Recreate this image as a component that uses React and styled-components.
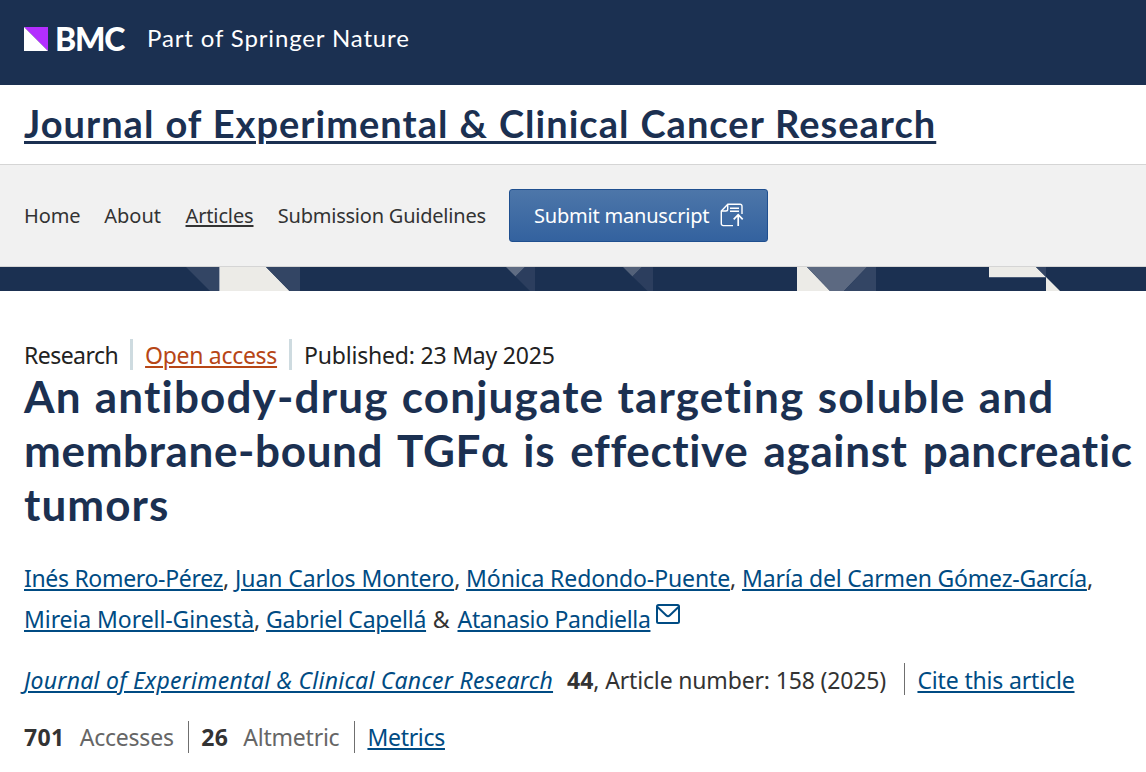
import React from "react";
import styled, { createGlobalStyle } from "styled-components";

const App = () => {
  return (
    <>
      <GlobalStyle />
      <TopBar>
        <LogoMark width="24" height="24" viewBox="0 0 24 24">
          <path d="M0 0h24v24z" fill="#b32eff" />
          <path d="M0 0l24 24H0z" fill="#fff" />
        </LogoMark>
        <Brand>BMC</Brand>
        <Tagline>Part of Springer Nature</Tagline>
      </TopBar>

      <JournalBar>
        <JournalLink>Journal of Experimental &amp; Clinical Cancer Research</JournalLink>
      </JournalBar>

      <Nav>
        <NavItem $width="56px" $track="-0.1px">Home</NavItem>
        <NavItem $width="57px">About</NavItem>
        <NavItem $width="68px" $track="-0.13px" $active>Articles</NavItem>
        <NavItem $width="208px" $track="-0.22px">Submission Guidelines</NavItem>
        <SubmitButton>
          <span>Submit manuscript</span>
          <UploadIcon />
        </SubmitButton>
      </Nav>

      <Pattern />

      <Article>
        <MetaList>
          <MetaItem $track="-0.55px">Research</MetaItem>
          <MetaItem $track="-0.3px">
            <OpenAccess>Open access</OpenAccess>
          </MetaItem>
          <MetaItem $track="-0.2px">Published: 23 May 2025</MetaItem>
        </MetaList>

        <Title>
          <TitleLine $track="1.17px" $word="1.3px">An antibody-drug conjugate targeting soluble and</TitleLine>
          <TitleLine $track="0.64px" $word="3.8px">membrane-bound TGFα is effective against pancreatic</TitleLine>
          <TitleLine $track="1.05px">tumors</TitleLine>
        </Title>

        <Authors>
          <AuthorLine>
            <Author><Link $track="-0.32px">Inés Romero-Pérez</Link>,</Author>
            <Author><Link $track="-0.08px">Juan Carlos Montero</Link>,</Author>
            <Author><Link $track="-0.12px">Mónica Redondo-Puente</Link>,</Author>
            <Author><Link $track="-0.19px">María del Carmen Gómez-García</Link>,</Author>
          </AuthorLine>
          <AuthorLine>
            <Author><Link $track="-0.08px">Mireia Morell-Ginestà</Link>,</Author>
            <Author><Link $track="-0.23px">Gabriel Capellá</Link></Author>
            <Ampersand>&amp;</Ampersand>
            <Author><Link $track="-0.32px">Atanasio Pandiella</Link></Author>
            <MailIcon />
          </AuthorLine>
        </Authors>

        <InfoRow>
          <JournalName $track="0.25px">Journal of Experimental &amp; Clinical Cancer Research</JournalName>
          <Volume>44</Volume>
          <ArticleNumber>, Article number: 158 (2025)</ArticleNumber>
          <Divider $left="18.5px" $right="12px" />
          <Link $track="-0.16px">Cite this article</Link>
        </InfoRow>

        <MetricsRow>
          <Count>701</Count>
          <Label $track="-0.22px">Accesses</Label>
          <Divider $left="14.5px" $right="12px" />
          <Count>26</Count>
          <Label $track="-0.23px">Altmetric</Label>
          <Divider $left="15px" $right="12px" />
          <Link $track="-0.3px">Metrics</Link>
        </MetricsRow>
      </Article>
    </>
  );
};

const UploadIcon = () => (
  <svg width="24" height="24" viewBox="0 0 24 24" fill="none" stroke="#fff" strokeWidth="1.4">
    <path d="M13 22.6H3.2A1.9 1.9 0 0 1 1.3 20.7V8L7.8 1.3h12.3A1.9 1.9 0 0 1 22 3.2V11" />
    <path d="M1.5 8h4.4A1.8 1.8 0 0 0 7.7 6.2V1.5" />
    <path d="M10 5.2h9M10 8.3h9" />
    <path d="M18.2 23V11.8M13.7 16.3l4.500-4.600 4.500 4.600" strokeWidth="1.7" />
  </svg>
);

const MailIcon = () => (
  <MailSvg width="24" height="20" viewBox="0 0 24 20" fill="none" stroke="#004b83" strokeWidth="2">
    <rect x="1" y="1" width="22" height="18" rx="1.5" />
    <path d="M1.5 3l8.900 8.500a2.300 2.300 0 0 0 3.200 0L22.500 3" />
  </MailSvg>
);

const Pattern = () => (
  <PatternSvg width="1146" height="24" viewBox="0 0 1146 24">
    <path d="M186 0h33v24h-9z" fill="#334564" />
    <path d="M220 0h46l23.500 24h-69.500z" fill="#ecebe7" />
    <path d="M219.5 0v24" stroke="#a6adba" />
    <path d="M266 0h34v24h-10.500z" fill="#334564" />
    <path d="M506 0h19l-9.500 9.500z" fill="#5f6c83" />
    <path d="M525 0h10v24h-5l-14.500-14.500z" fill="#2c3e5e" />
    <path d="M623 0h19l-9.500 9.500z" fill="#536179" />
    <path d="M642 0h11v24h-5.500l-15-14.500z" fill="#2c3e5e" />
    <path d="M797 0h10l23 24h-33z" fill="#ecebe7" />
    <path d="M807 0h60l-23 24h-14z" fill="#5c6981" />
    <path d="M867 0h9v24h-32z" fill="#334564" />
    <path d="M989 0h47l10 10h-57z" fill="#ecebe7" />
    <path d="M989 10.500h57" stroke="#4a5b76" />
    <path d="M1036 0h10v10z" fill="#334564" />
    <path d="M1046 10l14 14h-14z" fill="#ecebe7" />
  </PatternSvg>
);

const GlobalStyle = createGlobalStyle`
  * {
    box-sizing: border-box;
  }
  body {
    margin: 0;
    background: #fff;
    color: #333;
    font-family: "Noto Sans", "Open Sans", sans-serif;
    overflow: hidden;
  }
`;

const TopBar = styled.header`
  display: flex;
  align-items: flex-start;
  height: 85px;
  padding: 27px 24px 0;
  background: #1b3051;
  color: #fff;
  font-family: Lato, sans-serif;
  white-space: nowrap;
`;

const LogoMark = styled.svg`
  flex: none;
`;

const Brand = styled.span`
  width: 92px;
  margin-left: 7px;
  font-size: 32px;
  font-weight: 900;
  line-height: 24px;
  letter-spacing: -1.2px;
`;

const Tagline = styled.span`
  font-size: 24px;
  line-height: 21px;
  letter-spacing: 0.86px;
`;

const JournalBar = styled.div`
  height: 80px;
  padding: 0 24px;
  border-bottom: 1px solid #d5d5d5;
`;

const JournalLink = styled.a`
  color: #1b3051;
  font-family: Lato, sans-serif;
  font-size: 38px;
  font-weight: 700;
  line-height: 77px;
  letter-spacing: 1.01px;
  word-spacing: 0.8px;
  white-space: nowrap;
  text-decoration: underline;
  text-decoration-thickness: 3px;
  text-underline-offset: 3px;
`;

const Nav = styled.nav`
  display: flex;
  align-items: center;
  gap: 24.25px;
  height: 102px;
  padding: 0 24px;
  background: #f1f1f1;
  border-bottom: 1px solid #d5d5d5;
  font-size: 20px;
`;

const NavItem = styled.a`
  width: ${({ $width }) => $width};
  letter-spacing: ${({ $track }) => $track || "normal"};
  white-space: nowrap;
  text-decoration: ${({ $active }) => ($active ? "underline" : "none")};
  text-decoration-thickness: 2px;
  text-underline-offset: 2px;
`;

const SubmitButton = styled.button`
  display: flex;
  align-items: center;
  justify-content: space-between;
  width: 259px;
  height: 53px;
  margin-left: -1px;
  padding: 0 23px 0 24px;
  border: 1px solid #1f4f8f;
  border-radius: 3px;
  background: linear-gradient(#4d76a9, #33629f);
  color: #fff;
  font-family: inherit;
  font-size: 20px;
  letter-spacing: -0.2px;
  white-space: nowrap;

  svg {
    margin-top: -1px;
  }
`;

const PatternSvg = styled.svg`
  display: block;
  background: #1b3051;
`;

const Article = styled.main`
  padding: 48px 0 0 24px;
  font-size: 23px;
  white-space: nowrap;
`;

const MetaList = styled.ul`
  display: flex;
  height: 30px;
  margin: 0;
  padding: 0;
  color: #222;
  line-height: 32px;
  list-style: none;
`;

const MetaItem = styled.li`
  height: 31px;
  letter-spacing: ${({ $track }) => $track};

  & + & {
    margin-left: 12px;
    padding-left: 12px;
    border-left: 3px solid #cedbe0;
  }
`;

const OpenAccess = styled.a`
  color: #b74616;
  text-decoration: underline;
  text-decoration-thickness: 2px;
  text-underline-offset: 2px;
`;

const Title = styled.h1`
  margin: 0 0 27px;
  color: #1b3051;
  font-family: Lato, sans-serif;
  font-size: 44px;
  font-weight: 700;
  line-height: 54px;
`;

const TitleLine = styled.span`
  display: block;
  letter-spacing: ${({ $track }) => $track};
  word-spacing: ${({ $word }) => $word || "normal"};
`;

const Authors = styled.div`
  line-height: 41px;
`;

const AuthorLine = styled.div`
  display: flex;
  gap: 5.8px;
  height: 41px;
`;

const Author = styled.span``;

const Ampersand = styled(Author)`
  margin: 0 2px 0 1px;
`;

const Link = styled.a`
  color: #004b83;
  letter-spacing: ${({ $track }) => $track};
  text-decoration: underline;
  text-decoration-thickness: 2px;
  text-underline-offset: 2px;
`;

const MailSvg = styled.svg`
  margin-top: 5px;
`;

const InfoRow = styled.div`
  display: flex;
  height: 32px;
  margin-top: 23px;
  line-height: 34px;
`;

const JournalName = styled(Link)`
  font-style: italic;
`;

const Volume = styled.b`
  margin-left: 14px;
`;

const ArticleNumber = styled.span`
  letter-spacing: -0.16px;
`;

const Divider = styled.span`
  width: 1px;
  height: 32px;
  margin: 0 ${({ $right }) => $right} 0 ${({ $left }) => $left};
  background: #6f6f6f;
`;

const MetricsRow = styled(InfoRow)`
  margin-top: 26px;
  line-height: 32px;
`;

const Count = styled.b`
  letter-spacing: 0.4px;
`;

const Label = styled.span`
  margin-left: 15px;
  color: #666;
  letter-spacing: ${({ $track }) => $track};
`;

export default App;
